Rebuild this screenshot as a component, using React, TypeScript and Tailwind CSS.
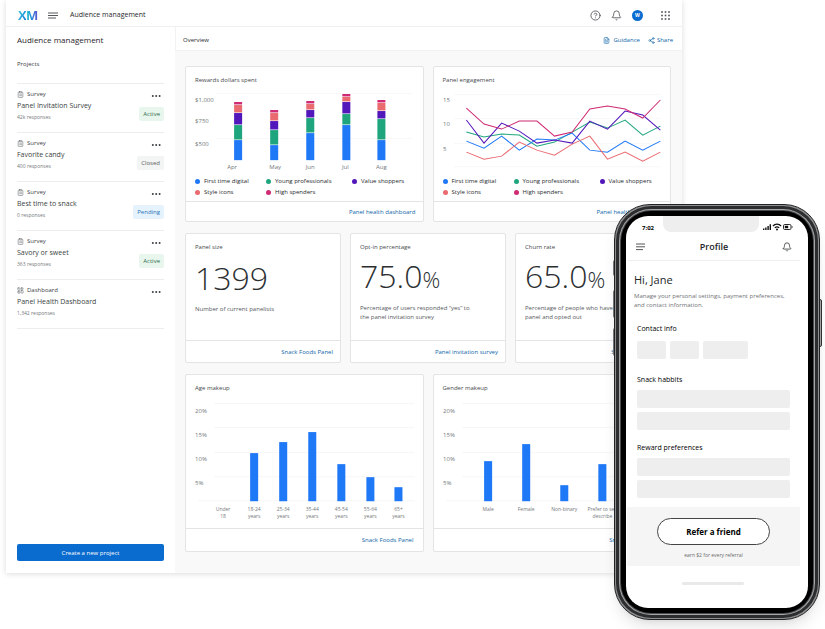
import React from "react"
import { Bell, CircleHelp, ClipboardList, FileText, LayoutDashboard, Share2 } from "lucide-react"
import clsx from "clsx"

const BLUE = "#1f78f6"
const GREEN = "#1fa57d"
const PURPLE = "#5217bb"
const CORAL = "#e96a6f"
const PINK = "#cf2a74"

interface Project {
    kind: string
    name: string
    responses: string
    status?: "Active" | "Closed" | "Pending"
}

const projects: Project[] = [
    { kind: "Survey", name: "Panel Invitation Survey", responses: "42k responses", status: "Active" },
    { kind: "Survey", name: "Favorite candy", responses: "400 responses", status: "Closed" },
    { kind: "Survey", name: "Best time to snack", responses: "0 responses", status: "Pending" },
    { kind: "Survey", name: "Savory or sweet", responses: "363 responses", status: "Active" },
    { kind: "Dashboard", name: "Panel Health Dashboard", responses: "1,342 responses" },
]

const statusStyles = {
    Active: "bg-[#e9f6ee] text-[#2c6e49]",
    Closed: "bg-[#f3f4f4] text-[#5c6063]",
    Pending: "bg-[#e6f2fc] text-[#2672b8]",
}

const legend = [
    { label: "First time digital", color: BLUE },
    { label: "Young professionals", color: GREEN },
    { label: "Value shoppers", color: PURPLE },
    { label: "Style icons", color: CORAL },
    { label: "High spenders", color: PINK },
]

// segment edges from the top of each bar down
const rewards = [
    { month: "Apr", x: 48, labelX: 46, edges: [14, 17, 25, 37, 52, 72] },
    { month: "May", x: 84, labelX: 89, edges: [22, 25, 33, 42, 57, 72] },
    { month: "Jun", x: 120, labelX: 124, edges: [13, 16, 22, 30, 45, 72] },
    { month: "Jul", x: 156, labelX: 159, edges: [6, 9, 14, 26, 37, 72] },
    { month: "Aug", x: 191, labelX: 195, edges: [12, 15, 23, 31, 52, 72] },
]
const stackColors = [PINK, CORAL, PURPLE, GREEN, BLUE]

const engagement = [
    { color: GREEN, points: [44, 49, 46, 47, 58, 54, 44, 34, 40, 32, 47, 38] },
    { color: BLUE, points: [53, 60, 48, 62, 51, 52, 45, 62, 64, 53, 62, 53] },
    { color: CORAL, points: [64, 71, 68, 54, 62, 67, 56, 48, 71, 64, 73, 64] },
    { color: PURPLE, points: [32, 55, 35, 43, 55, 52, 55, 33, 41, 23, 27, 42] },
    { color: PINK, points: [20, 36, 41, 33, 33, 48, 44, 21, 18, 21, 30, 12] },
]

interface Bar {
    label: string[]
    x: number
    top: number
}

const ages: Bar[] = [
    { label: ["Under", "18"], x: 33, top: 105 },
    { label: ["18-24", "years"], x: 64, top: 57 },
    { label: ["25-34", "years"], x: 93, top: 46 },
    { label: ["35-44", "years"], x: 122, top: 36 },
    { label: ["45-54", "years"], x: 151, top: 68 },
    { label: ["55-64", "years"], x: 180, top: 81 },
    { label: ["65+", "years"], x: 208, top: 91 },
]

const genders: Bar[] = [
    { label: ["Male"], x: 50, top: 65 },
    { label: ["Female"], x: 88, top: 48 },
    { label: ["Non-binary"], x: 126, top: 89 },
    { label: ["Prefer to self", "describe"], x: 164, top: 68 },
    { label: ["Other"], x: 202, top: 96 },
]

function Dots() {
    return (
        <svg viewBox="0 0 10 4" className="w-2.5 h-1" fill="#3c4043">
            <circle cx="1.8" cy="2" r="1" />
            <circle cx="5.2" cy="2" r="1" />
            <circle cx="8.6" cy="2" r="1" />
        </svg>
    )
}

function MenuIcon() {
    return (
        <svg viewBox="0 0 10 8" className="w-2.5 h-2" stroke="#55595c" strokeWidth="1">
            <path d="M0 1h10M0 3.5h10M0 6h8" />
        </svg>
    )
}

function Header() {
    return (
        <header className="flex h-[27px] items-center border-b border-[#f0f0f0] pl-3 pr-3 pt-[5px]">
            <div className="w-[18px] text-[13px] leading-none font-bold tracking-tighter">
                <span className="bg-linear-to-br from-[#3fd0e0] via-[#2aa8dc] to-[#1b66d6] bg-clip-text text-transparent">X</span>
                <span className="bg-linear-to-r from-[#22c7c0] via-[#2686dd] to-[#5a50c8] bg-clip-text text-transparent">M</span>
            </div>
            <button type="button" aria-label="Menu" className="ml-3">
                <MenuIcon />
            </button>
            <span className="ml-3 text-[7px] text-[#26292c]">Audience management</span>
            <div className="ml-auto flex items-center text-[#4a4e51]">
                <button type="button" aria-label="Help">
                    <CircleHelp className="h-[11px] w-[11px]" strokeWidth={1.8} />
                </button>
                <button type="button" aria-label="Notifications" className="ml-2.5">
                    <Bell className="h-[11px] w-[11px]" strokeWidth={1.8} />
                </button>
                <button
                    type="button"
                    className="ml-2.5 flex h-[11px] w-[11px] items-center justify-center rounded-full bg-[#0b6cd0] text-[5px] font-bold text-white"
                >
                    W
                </button>
                <button type="button" aria-label="Apps" className="ml-[18px]">
                    <svg viewBox="0 0 9 9" className="h-[9px] w-[9px]" fill="#4a4e51">
                        {[1, 4.5, 8].map((y) => [1, 4.5, 8].map((x) => <rect key={`${x}-${y}`} x={x - 0.8} y={y - 0.8} width="1.6" height="1.6" />))}
                    </svg>
                </button>
            </div>
        </header>
    )
}

function ProjectItem({ project }: { project: Project }) {
    const Icon = project.kind === "Survey" ? ClipboardList : LayoutDashboard
    return (
        <li className="flex h-[49px] justify-between border-t border-[#ededed] pt-[5px]">
            <div>
                <p className="flex items-center gap-[3px] text-[6px] leading-[10px] text-[#3d4043]">
                    <Icon className="h-[7px] w-[7px] text-[#6b6f72]" strokeWidth={2} />
                    {project.kind}
                </p>
                <p className="text-[7px] leading-[13px] text-[#3b3f42]">{project.name}</p>
                <p className="text-[5px] leading-[10px] text-[#75797c]">{project.responses}</p>
            </div>
            <div className="flex flex-col items-end">
                <button type="button" aria-label={`${project.name} options`} className="mr-[3px] mt-[5px]">
                    <Dots />
                </button>
                {project.status && (
                    <span className={clsx("mt-[9px] rounded-xs px-1 text-[6px] leading-[14px]", statusStyles[project.status])}>
                        {project.status}
                    </span>
                )}
            </div>
        </li>
    )
}

function Sidebar() {
    return (
        <aside className="flex w-[169px] shrink-0 flex-col bg-white pb-3 pl-[11px] pr-[11px]">
            <h1 className="mt-[7px] text-[8px] leading-3 text-[#1f2326]">Audience management</h1>
            <h2 className="mt-3 text-[6px] leading-3 text-[#3d4043]">Projects</h2>
            <ul className="mt-[13px] border-b border-[#ededed]">
                {projects.map((project) => (
                    <ProjectItem key={project.name} project={project} />
                ))}
            </ul>
            <button type="button" className="mt-auto h-[17px] rounded-xs bg-[#0b6cd0] text-[6px] leading-none text-white">
                Create a new project
            </button>
        </aside>
    )
}

interface CardProps {
    title: string
    link: string
    footer?: string
    children: React.ReactNode
}

function Card({ title, link, footer = "h-[20px] pr-[7px]", children }: CardProps) {
    return (
        <section className="flex min-w-0 flex-col rounded-xs border border-[#e3e4e4] bg-white">
            <h3 className="mt-2 px-[9px] text-[6px] leading-[10px] text-[#45494c]">{title}</h3>
            <div className="flex-1">{children}</div>
            <div className={clsx("flex items-center justify-end border-t border-[#e3e4e4]", footer)}>
                <a href="#" className="text-[6px] leading-none whitespace-nowrap text-[#0f66a8]">{link}</a>
            </div>
        </section>
    )
}

function Legend() {
    return (
        <ul className="mt-1 grid grid-cols-[71px_86px_1fr] px-[9px] pb-[3px] text-[6px] leading-[11px] text-[#26292c]">
            {legend.map((item) => (
                <li key={item.label} className="flex items-center gap-1 whitespace-nowrap">
                    <span className="h-[5px] w-[5px] rounded-full" style={{ backgroundColor: item.color }} />
                    {item.label}
                </li>
            ))}
        </ul>
    )
}

function RewardsChart() {
    return (
        <svg viewBox="0 0 236 84" className="mt-[3px] block w-full" fontSize="6" fill="#74787b">
            <path d="M30 5.5H226M30 50.5H226" stroke="#f8f8f8" />
            <text x="9" y="14">$1,000</text>
            <text x="9" y="35">$750</text>
            <text x="9" y="58">$500</text>
            {rewards.map((bar) => (
                <g key={bar.month}>
                    {stackColors.map((color, i) => (
                        <rect key={color} x={bar.x} y={bar.edges[i]} width="8" height={bar.edges[i + 1] - bar.edges[i] - (i < 4 ? 0.6 : 0)} fill={color} />
                    ))}
                    <text x={bar.labelX} y="81" textAnchor="middle">{bar.month}</text>
                </g>
            ))}
        </svg>
    )
}

function EngagementChart() {
    return (
        <svg viewBox="0 0 236 84" className="mt-[3px] block w-full" fontSize="6" fill="#74787b">
            <path d="M20 6.5H226M20 30.5H226M20 55.5H226M20 78.5H226" stroke="#f8f8f8" />
            <text x="9" y="14">15</text>
            <text x="9" y="38">10</text>
            <text x="9" y="63">5</text>
            {engagement.map((line) => (
                <polyline
                    key={line.color}
                    points={line.points.map((y, i) => `${32.3 + i * 17.6},${y}`).join(" ")}
                    fill="none"
                    stroke={line.color}
                    strokeWidth="1"
                />
            ))}
        </svg>
    )
}

function BarChart({ bars }: { bars: Bar[] }) {
    return (
        <svg viewBox="0 0 236 126" className="mt-[3px] block w-full" fill="#74787b">
            <path d="M28 7.5H228M28 31.5H228M28 56.5H228M28 80.5H228M12 104.5H228" stroke="#f7f7f7" />
            <g fontSize="6">
                <text x="9" y="17">20%</text>
                <text x="9" y="41">15%</text>
                <text x="9" y="65">10%</text>
                <text x="9" y="89">5%</text>
            </g>
            {bars.map((bar) => (
                <g key={bar.label[0]} fontSize="5">
                    <rect x={bar.x} y={bar.top} width="8" height={105 - bar.top} fill={BLUE} />
                    {bar.label.map((line, i) => (
                        <text key={line} x={bar.x + 4} y={115 + i * 7} textAnchor="middle">{line}</text>
                    ))}
                </g>
            ))}
        </svg>
    )
}

interface StatProps {
    value: string
    percent?: boolean
    children: React.ReactNode
}

function Stat({ value, percent, children }: StatProps) {
    return (
        <div className="px-[9px] pt-[5px] text-[#2c2f32]">
            <p className={clsx("text-[32px] font-light whitespace-nowrap", percent ? "leading-[38px]" : "leading-[42px]")}>
                {value}
                {percent && <span className="text-[22px]">%</span>}
            </p>
            <p className="mt-1.5 text-[6px] leading-[9px] whitespace-nowrap text-[#56595c]">{children}</p>
        </div>
    )
}

function Dashboard() {
    return (
        <main className="min-w-0 flex-1 bg-[#f9f9f9]">
            <div className="flex h-6 items-center border-b border-l border-[#f2f2f2] bg-white pt-[3px] pl-[7px] pr-[9px] text-[6px]">
                <h2 className="text-[#26292c]">Overview</h2>
                <a href="#" className="ml-auto flex items-center gap-[3px] text-[#0f66a8]">
                    <FileText className="h-[7px] w-[7px]" />
                    Guidance
                </a>
                <a href="#" className="ml-2 flex items-center gap-0.5 text-[#0f66a8]">
                    <Share2 className="h-[7px] w-[7px]" />
                    Share
                </a>
            </div>
            <div className="flex flex-col gap-[11px] pt-[15px] pr-[11px] pb-[21px] pl-2.5">
                <div className="grid h-[156px] grid-cols-2 gap-[9px]">
                    <Card title="Rewards dollars spent" link="Panel health dashboard">
                        <RewardsChart />
                        <Legend />
                    </Card>
                    <Card title="Panel engagement" link="Panel health dashboard">
                        <EngagementChart />
                        <Legend />
                    </Card>
                </div>
                <div className="grid h-[130px] grid-cols-3 gap-[9px]">
                    <Card title="Panel size" link="Snack Foods Panel" footer="h-[22px] pr-[7px]">
                        <Stat value="1399">Number of current panelists</Stat>
                    </Card>
                    <Card title="Opt-in percentage" link="Panel invitation survey" footer="h-[22px] pr-[7px]">
                        <Stat value="75.0" percent>
                            Percentage of users responded “yes” to
                            <br />
                            the panel invitation survey
                        </Stat>
                    </Card>
                    <Card title="Churn rate" link="Snack Foods Panel" footer="h-[22px] pr-[7px]">
                        <Stat value="65.0" percent>
                            Percentage of people who have left the
                            <br />
                            panel and opted out
                        </Stat>
                    </Card>
                </div>
                <div className="grid h-[178px] grid-cols-2 gap-[9px]">
                    <Card title="Age makeup" link="Snack Foods Panel" footer="h-[23px] pr-[9px]">
                        <BarChart bars={ages} />
                    </Card>
                    <Card title="Gender makeup" link="Snack Foods Panel" footer="h-[23px] pr-[9px]">
                        <BarChart bars={genders} />
                    </Card>
                </div>
            </div>
        </main>
    )
}

const field = "block h-[18px] rounded-xs bg-[#eeeeef]"

function StatusBar() {
    return (
        <div className="flex justify-between pl-4 pr-[15px]">
            <span className="mt-[7px] text-[6px] leading-[10px] font-bold text-black">7:02</span>
            <div className="ml-[5px] h-4 w-24 rounded-b-lg bg-[#eeeeee]" />
            <svg viewBox="0 0 30 8" className="mt-[7px] h-2 w-[30px]" fill="#111">
                <path d="M0 5.5h1.4V7H0zM2.2 4.5h1.4V7H2.2zM4.4 3h1.4v4H4.4zM6.6 1.2H8V7H6.6z" />
                <path d="M9.9 3a5.6 5.6 0 0 1 8.2 0M11.8 4.9a3.2 3.2 0 0 1 4.4 0" fill="none" stroke="#111" strokeWidth="1.2" />
                <circle cx="14" cy="6.4" r="1" />
                <rect x="20.5" y="1.5" width="7.5" height="5" rx="1.2" fill="none" stroke="#111" strokeWidth=".9" />
                <path d="M21.8 2.7h3.4v2.6h-3.4zM28.8 3.2h.7v1.6h-.7z" />
            </svg>
        </div>
    )
}

function Phone() {
    return (
        <div className="absolute top-[204px] right-[5px] w-[206px]">
            <span className="absolute top-14 -left-px h-4 w-1 rounded-xs bg-[#77797b]" />
            <span className="absolute top-[86px] -left-px h-7 w-1 rounded-xs bg-[#77797b]" />
            <span className="absolute top-[124px] -left-px h-7 w-1 rounded-xs bg-[#77797b]" />
            <span className="absolute top-[95px] -right-0.5 h-12 w-1 rounded-xs border border-[#333] bg-[#aaa]" />
            <div className="relative rounded-[36px] border border-[#222] bg-[#8d8f91] p-px shadow-lg">
                <div className="rounded-[35px] bg-[#2c2d2e] p-[3px]">
                    <div className="rounded-[32px] bg-[#a4a6a8] p-px">
                        <div className="rounded-[31px] bg-[#4a4b4d] p-px">
                            <div className="rounded-[30px] bg-black p-[5px]">
                                <div className="flex h-[392px] flex-col overflow-hidden rounded-[22px] bg-white text-[#222527]">
                                    <StatusBar />
                                    <div className="mr-2 ml-0.5 flex h-7 items-center justify-between border-b border-[#eeeeee] pl-2 pr-2">
                                        <button type="button" aria-label="Menu">
                                            <svg viewBox="0 0 10 8" className="h-2 w-2.5" stroke="#444" strokeWidth=".9">
                                                <path d="M0 1h9M0 3.8h9M0 6.6h7" />
                                            </svg>
                                        </button>
                                        <h2 className="text-[9px] font-semibold">Profile</h2>
                                        <button type="button" aria-label="Notifications">
                                            <Bell className="h-2.5 w-2.5" strokeWidth={1.8} />
                                        </button>
                                    </div>
                                    <div className="pt-[11px] pl-2">
                                        <h3 className="text-[11px] leading-4">Hi, Jane</h3>
                                        <p className="mt-1 text-[6px] leading-[9px] whitespace-nowrap text-[#707376]">
                                            Manage your personal settings, payment preferences,
                                            <br />
                                            and contact information.
                                        </p>
                                    </div>
                                    <div className="pt-[13px] pr-[18px] pl-[11px] text-[7px] text-black">
                                        <h4 id="contact" className="leading-3">Contact info</h4>
                                        <div className="mt-1.5 flex gap-1">
                                            <input aria-labelledby="contact" className={clsx(field, "w-[29px]")} />
                                            <input aria-labelledby="contact" className={clsx(field, "w-[29px]")} />
                                            <input aria-labelledby="contact" className={clsx(field, "w-[45px]")} />
                                        </div>
                                        <h4 id="snacks" className="mt-[15px] leading-3">Snack habbits</h4>
                                        <input aria-labelledby="snacks" className={clsx(field, "mt-1 w-full")} />
                                        <input aria-labelledby="snacks" className={clsx(field, "mt-1 w-full")} />
                                        <h4 id="rewards" className="mt-3 leading-3">Reward preferences</h4>
                                        <input aria-labelledby="rewards" className={clsx(field, "mt-1 w-full")} />
                                        <input aria-labelledby="rewards" className={clsx(field, "mt-1 w-full")} />
                                    </div>
                                    <div className="mt-[9px] mr-2 ml-px flex flex-col items-center bg-[#f5f5f5] pt-[11px] pb-1.5">
                                        <button
                                            type="button"
                                            className="h-[27px] w-[113px] rounded-full border border-[#444] bg-white text-[8px] font-bold text-black"
                                        >
                                            Refer a friend
                                        </button>
                                        <p className="mt-1.5 text-[5px] leading-[9px] text-[#67696b]">earn $2 for every referral</p>
                                    </div>
                                    <div className="mt-4 mr-2 h-[3px] w-[62px] self-center rounded-full bg-[#e9e9ea]" />
                                </div>
                            </div>
                        </div>
                    </div>
                </div>
            </div>
        </div>
    )
}

export default function App(): React.JSX.Element {
    return (
        <div className="relative bg-white pb-14 pr-[143px] pl-1.5 font-['Open_Sans','Noto_Sans',sans-serif]">
            <div className="bg-white shadow-[0_1px_6px_rgba(0,0,0,0.14)]">
                <Header />
                <div className="flex">
                    <Sidebar />
                    <Dashboard />
                </div>
            </div>
            <Phone />
        </div>
    )
}
